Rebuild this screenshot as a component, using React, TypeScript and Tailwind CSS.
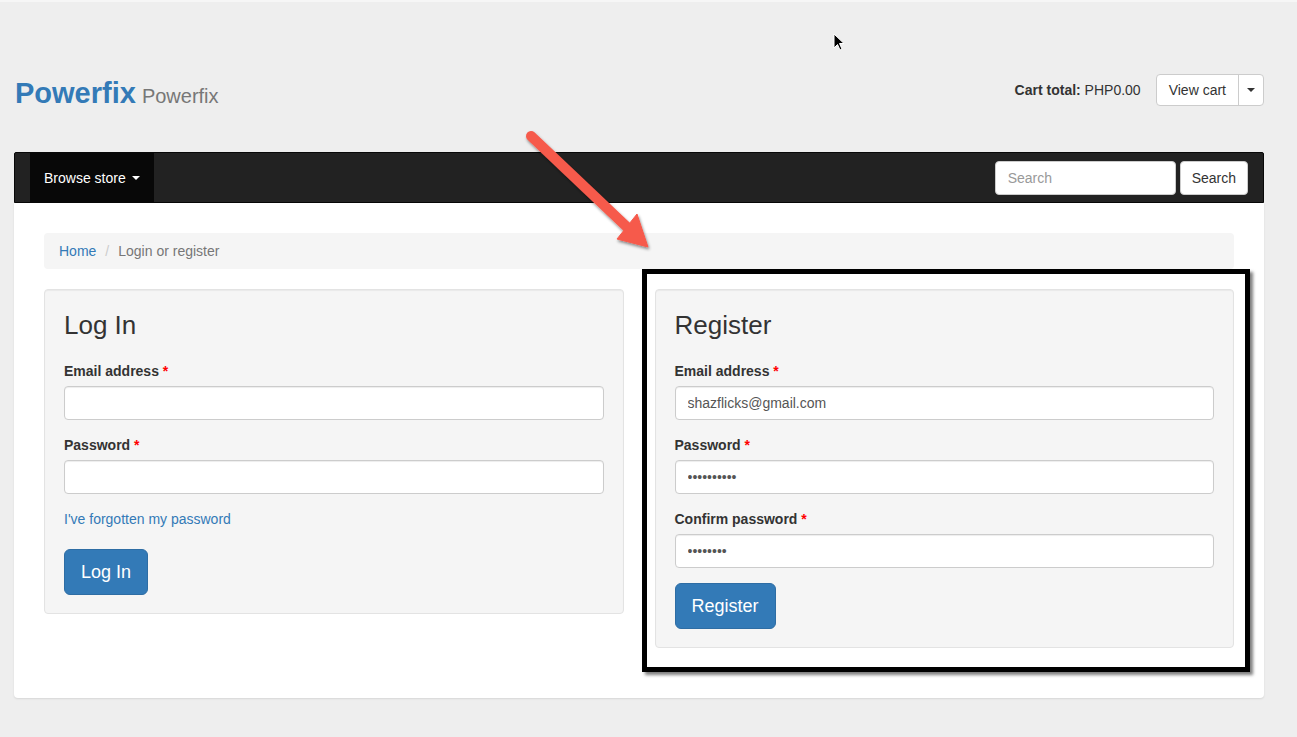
import React from "react";

function Field({ label, type = "text", value }: { label: string; type?: string; value?: string }) {
  return (
    <div className="mb-[15px]">
      <label className="block mb-[5px] text-[14px] leading-[20px] font-bold text-[#333]">
        {label} <span className="text-[#ff0000]">*</span>
      </label>
      <input
        type={type}
        defaultValue={value}
        className="block w-full h-[34px] px-[12px] text-[14px] text-[#555] bg-white border border-[#ccc] rounded-[4px] shadow-[inset_0_1px_1px_rgba(0,0,0,0.075)] outline-none"
      />
    </div>
  );
}

function Well({ children }: { children: React.ReactNode }) {
  return (
    <div className="mb-[20px] bg-[#f5f5f5] border border-[#e3e3e3] rounded-[4px] pt-[19px] px-[19px] pb-[18px] shadow-[inset_0_1px_1px_rgba(0,0,0,0.05)]">
      {children}
    </div>
  );
}

export default function App() {
  return (
    <div
      className="relative min-h-[737px] bg-[#eeeeee] border-t-2 border-[#f6f6f6] text-[#333] text-[14px] leading-[20px]"
      style={{ fontFamily: '"Liberation Sans", Arial, sans-serif' }}
    >
      <div className="w-[1250px] ml-[14px]">
        {/* header */}
        <div className="flex items-start justify-between h-[150px]">
          <div className="pt-[73px] flex items-baseline">
            <span className="ml-[1px] text-[29px] leading-[36px] font-bold text-[#337ab7]">Powerfix</span>
            <span className="ml-[6px] text-[20px] text-[#777]">Powerfix</span>
          </div>
          <div className="pt-[72px] flex items-center">
            <span className="mr-[15px]">
              <b>Cart total:</b> PHP0.00
            </span>
            <div className="flex h-[32px] rounded-[4px] border border-[#ccc] bg-white">
              <span className="flex items-center px-[12px] border-r border-[#ccc]">View cart</span>
              <span className="flex items-center px-[8px]">
                <span className="w-0 h-0 border-x-[4px] border-x-transparent border-t-[4px] border-t-[#333]" />
              </span>
            </div>
          </div>
        </div>

        {/* navbar */}
        <div className="flex items-center justify-between h-[51px] bg-[#222] border border-[#080808] rounded-t-[2px] pl-[15px] pr-[15px]">
          <div className="flex items-center h-full bg-[#080808] px-[14px] text-white">
            Browse store
            <span className="ml-[6px] w-0 h-0 border-x-[4px] border-x-transparent border-t-[4px] border-t-white" />
          </div>
          <div className="flex items-center gap-[4px]">
            <input
              placeholder="Search"
              className="w-[181px] h-[34px] px-[12px] bg-white rounded-[4px] border border-[#ccc] text-[14px] placeholder:text-[#999] outline-none"
            />
            <button className="h-[34px] px-[11px] bg-white rounded-[4px] border border-[#ccc] text-[#333]">Search</button>
          </div>
        </div>

        {/* main */}
        <div className="bg-white rounded-b-[4px] shadow-[0_1px_2px_rgba(0,0,0,0.1)] px-[30px] pt-[30px] pb-[30px]">
          <div className="flex items-center h-[36px] px-[15px] bg-[#f5f5f5] rounded-[4px] mb-[20px]">
            <span className="text-[#337ab7]">Home</span>
            <span className="px-[9px] text-[#ccc]">/</span>
            <span className="text-[#777]">Login or register</span>
          </div>

          <div className="grid grid-cols-2 gap-[31px] items-start">
            <Well>
              <h2 className="text-[26px] leading-[29px] font-medium mb-[21px] mt-[2px]">Log In</h2>
              <Field label="Email address" />
              <Field label="Password" type="password" />
              <div className="mb-[20px] text-[#337ab7]">I've forgotten my password</div>
              <button className="h-[46px] px-[16px] rounded-[6px] bg-[#337ab7] border border-[#2e6da4] text-white text-[18px]">
                Log In
              </button>
            </Well>
            <Well>
              <h2 className="text-[26px] leading-[29px] font-medium mb-[21px] mt-[2px]">Register</h2>
              <Field label="Email address" value="shazflicks@gmail.com" />
              <Field label="Password" type="password" value="0123456789" />
              <Field label="Confirm password" type="password" value="01234567" />
              <button className="h-[46px] px-[16px] rounded-[6px] bg-[#337ab7] border border-[#2e6da4] text-white text-[18px]">
                Register
              </button>
            </Well>
          </div>
        </div>
      </div>

      {/* annotation box */}
      <div className="absolute left-[642px] top-[267px] w-[608px] h-[403px] border-[5px] border-black shadow-[3px_3px_3px_rgba(0,0,0,0.5)] pointer-events-none" />

      {/* annotation arrow */}
      <svg className="absolute left-0 top-0 pointer-events-none" width="700" height="280">
        <defs>
          <filter id="sh" x="-20%" y="-20%" width="140%" height="140%">
            <feDropShadow dx="1" dy="2" stdDeviation="1.5" floodColor="#000" floodOpacity="0.45" />
          </filter>
        </defs>
        <g filter="url(#sh)" fill="#f65a4c" stroke="#f65a4c">
          <line x1="531" y1="134" x2="628" y2="226" strokeWidth="10" strokeLinecap="round" />
          <polygon points="648,245 617,237 637,212" strokeWidth="1" strokeLinejoin="round" />
        </g>
      </svg>

      {/* mouse cursor */}
      <svg className="absolute left-[833px] top-[31px] pointer-events-none" width="14" height="20" viewBox="0 0 14 20">
        <path d="M1 1 L1 15 L4.5 11.5 L7 17 L9 16 L6.5 10.5 L11 10.5 Z" fill="#000" stroke="#fff" strokeWidth="1" />
      </svg>
    </div>
  );
}
